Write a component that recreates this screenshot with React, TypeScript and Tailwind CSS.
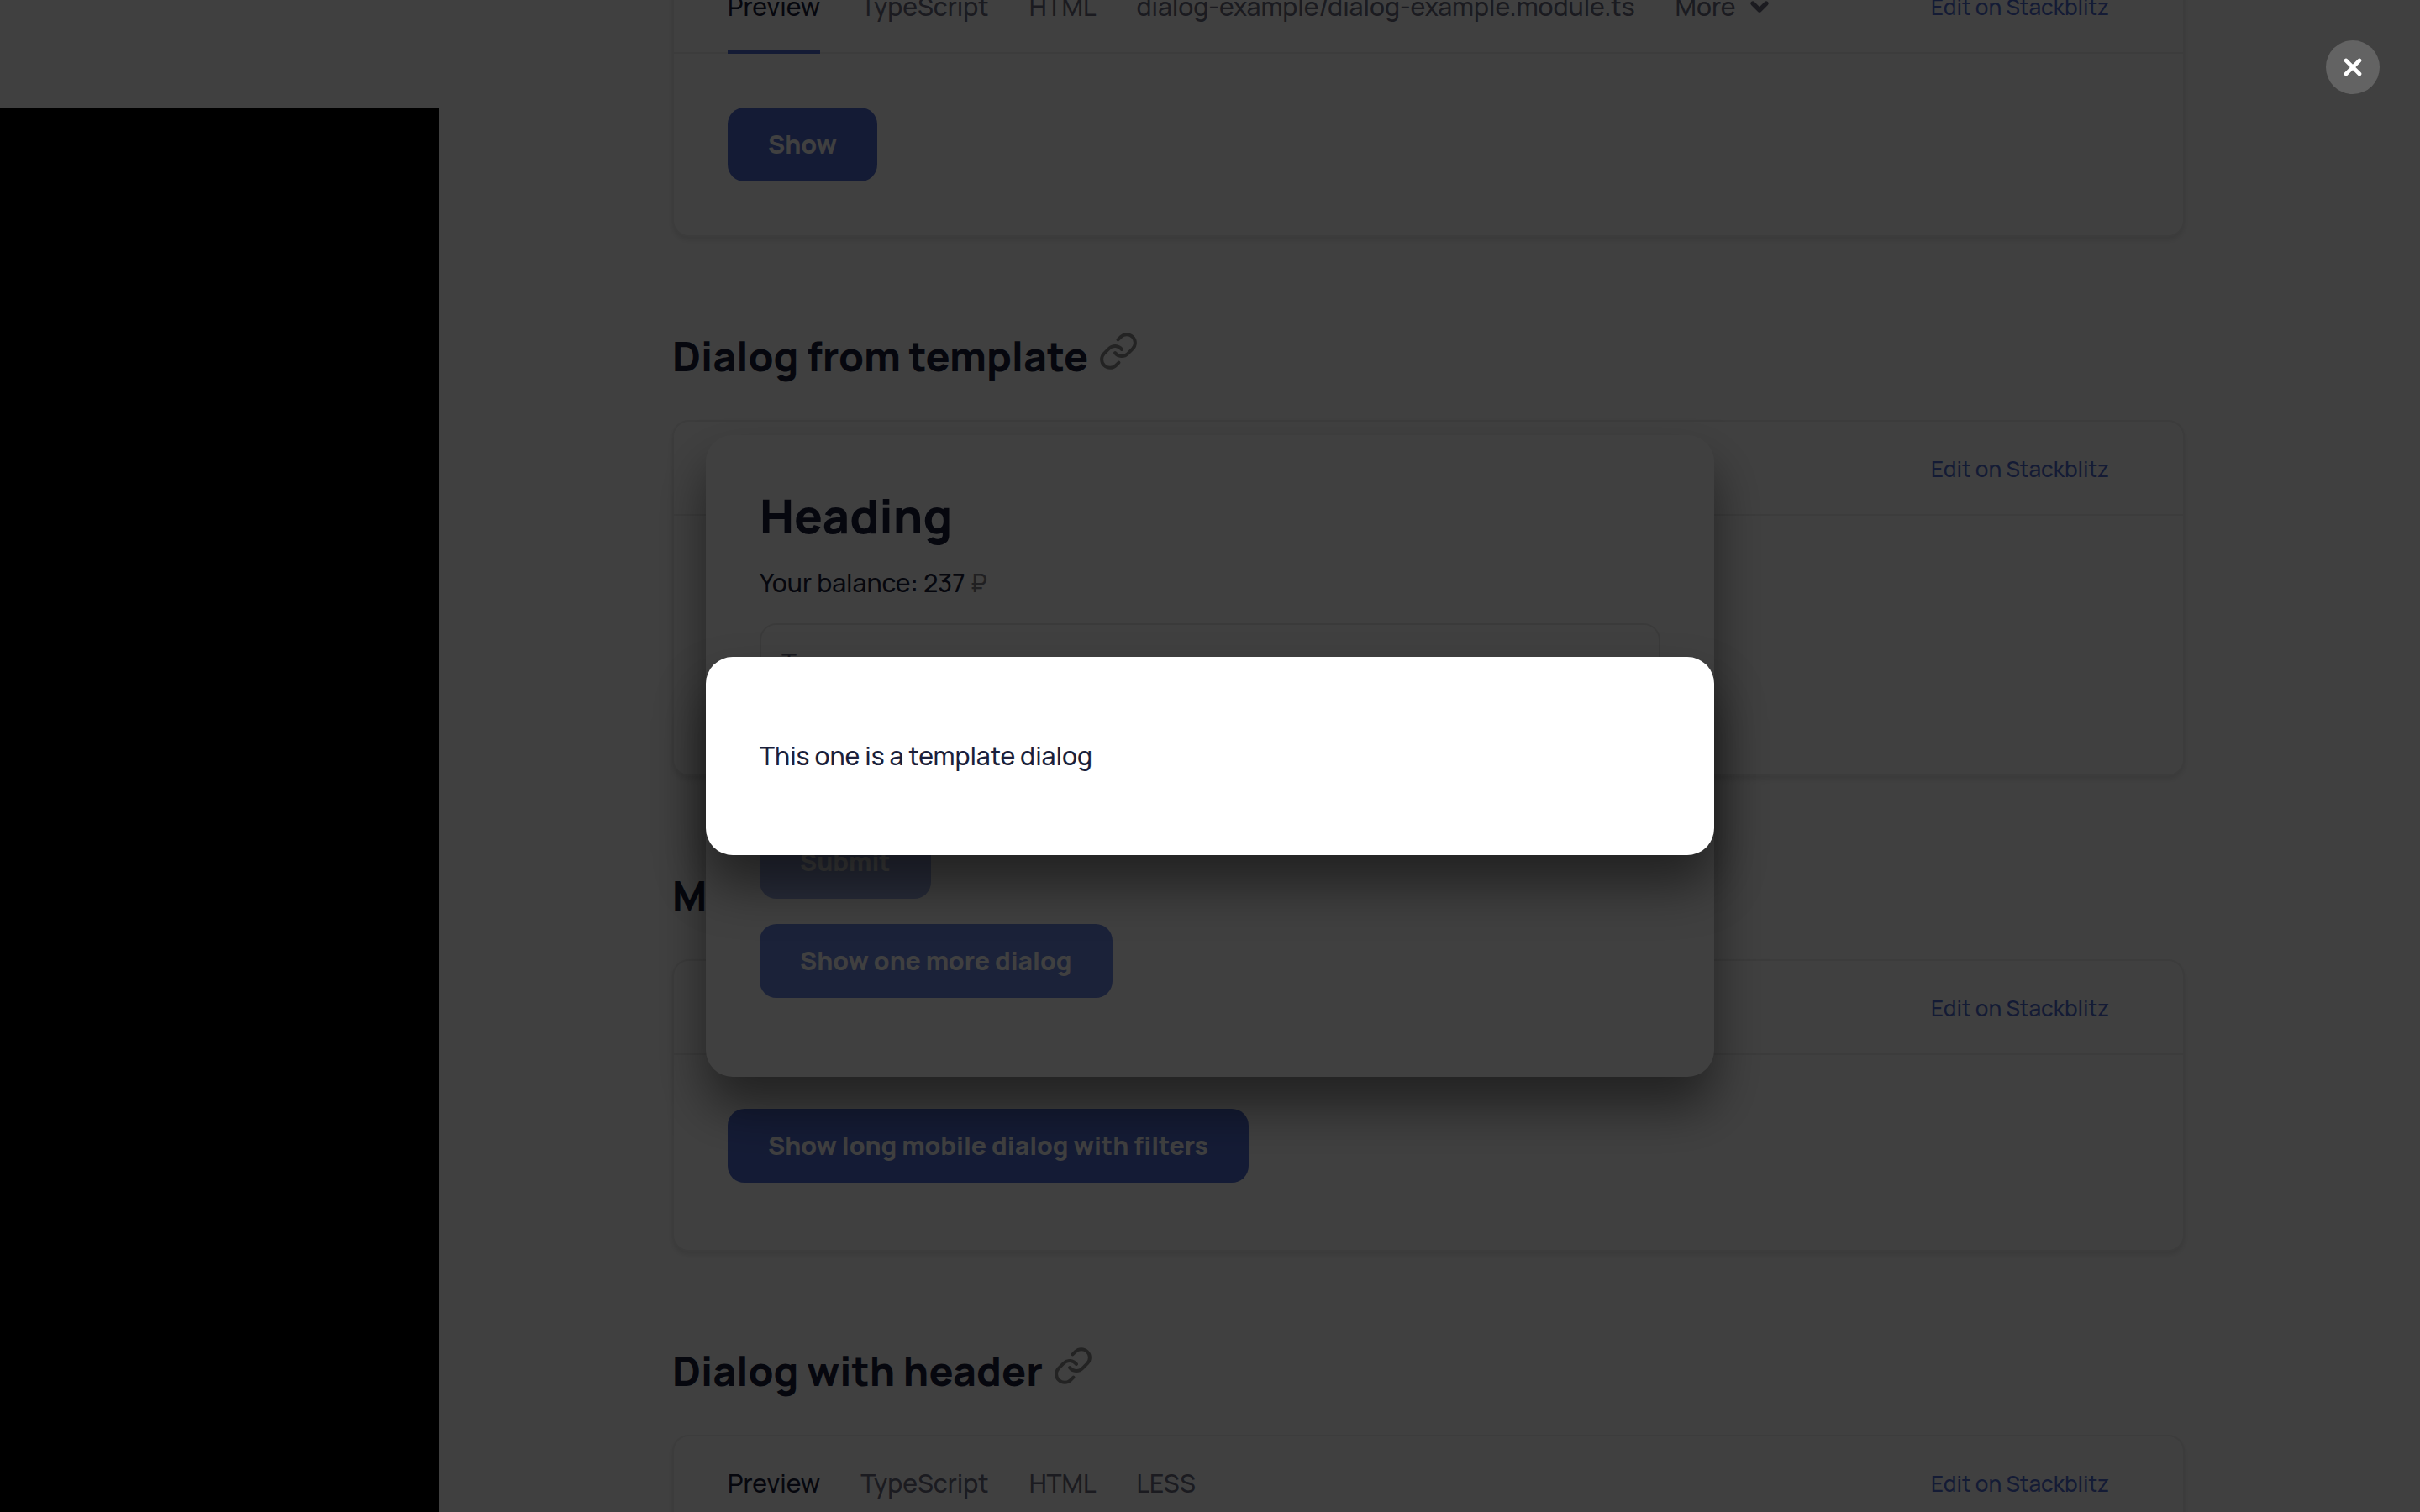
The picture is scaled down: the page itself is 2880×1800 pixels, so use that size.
import type { ReactNode } from "react";
import { ChevronDown, Link, X } from "lucide-react";

const primaryButton = "h-22 rounded-[20px] px-12 text-[30px] leading-9 font-extrabold text-white";

function Heading({ children }: { children: ReactNode }) {
  return (
    <h2 className="mt-28 mb-[46px] flex items-start gap-3 text-[48px] leading-15 font-extrabold">
      {children}
      <a href="#" aria-label="Link to this section" className="text-[#8d8d8d]">
        <Link size={48} strokeWidth={2} />
      </a>
    </h2>
  );
}

function Card({ tabs, more, children }: { tabs: string[]; more?: boolean; children?: ReactNode }) {
  return (
    <section className="rounded-[20px] border-2 border-[#ededed] bg-white shadow-[0_4px_6px_rgba(0,0,0,0.1)]">
      <header className="flex h-28 items-stretch border-b-2 border-[#ededed] pr-[88px] pl-16">
        <nav className="-mb-0.5 flex flex-1 gap-12 text-[30px] leading-9 text-[#6b6d7f]">
          {tabs.map((tab, i) => (
            <button
              key={tab}
              type="button"
              className={i === 0 ? "border-b-4 border-[#526ed3] pt-1 text-[#1b1f3b]" : ""}
            >
              {tab}
            </button>
          ))}
          {more && (
            <button type="button" className="flex items-center gap-3">
              More
              <ChevronDown size={32} strokeWidth={4} />
            </button>
          )}
        </nav>
        <a href="#" className="self-center pt-0.5 text-[26px] leading-9 text-[#526ed3]">
          Edit on Stackblitz
        </a>
      </header>
      {children}
    </section>
  );
}

export default function App() {
  return (
    <div className="relative h-screen overflow-hidden bg-white font-['Manrope','Inter',sans-serif] text-[30px] leading-12 font-medium text-[#1b1f3b]">
      <div className="flex h-full">
        <aside className="mt-32 w-[522px] shrink-0 bg-black" />
        <main className="-mt-[50px] min-w-0 flex-1 pr-[280px] pl-[278px]">
          <Card tabs={["Preview", "TypeScript", "HTML", "dialog-example/dialog-example.module.ts"]} more>
            <div className="p-16 leading-none">
              <button type="button" className={`${primaryButton} bg-[#526ed3]`}>Show</button>
            </div>
          </Card>

          <Heading>Dialog from template</Heading>
          <Card tabs={[]}>
            <div className="h-[308px]" />
          </Card>

          <Heading>Mobile dialog</Heading>
          <Card tabs={[]}>
            <div className="p-16 pb-20 leading-none">
              <button type="button" className={`${primaryButton} bg-[#526ed3]`}>
                Show long mobile dialog with filters
              </button>
            </div>
          </Card>

          <Heading>Dialog with header</Heading>
          <Card tabs={["Preview", "TypeScript", "HTML", "LESS"]}>
            <div className="h-60" />
          </Card>
        </main>
      </div>

      <div className="absolute inset-0 flex items-center justify-center">
        <div
          role="dialog"
          aria-label="Heading"
          className="flex w-[1200px] flex-col items-start rounded-[32px] bg-white px-16 pt-16 pb-[94px] shadow-[0_36px_60px_rgba(0,0,0,0.48)]"
        >
          <h2 className="text-[56px] leading-16 font-extrabold">Heading</h2>
          <p className="mt-6">
            Your balance: 237 <span className="text-[#7f8089]">₽</span>
          </p>
          <input
            type="text"
            aria-label="Type a name"
            placeholder="Type a name"
            className="mt-6 h-[92px] w-full rounded-[20px] border-2 border-[#e8e8e8] px-6 placeholder:text-[#6b6d7f]"
          />
          <button type="button" disabled className={`${primaryButton} mt-[148px] bg-[#526ed3] opacity-55`}>
            Submit
          </button>
          <button type="button" className={`${primaryButton} mt-[30px] bg-[#6c86e2]`}>
            Show one more dialog
          </button>
        </div>
      </div>

      <div className="absolute inset-0 flex items-center justify-center bg-black/75">
        <div
          role="dialog"
          aria-modal="true"
          aria-label="Template dialog"
          className="w-[1200px] rounded-[32px] bg-white px-16 py-[94px] shadow-[0_36px_60px_rgba(0,0,0,0.48)]"
        >
          <p>This one is a template dialog</p>
        </div>
        <button
          type="button"
          aria-label="Close"
          className="absolute top-12 right-12 flex size-16 items-center justify-center rounded-full bg-[#636363] text-white"
        >
          <X size={32} strokeWidth={3.5} />
        </button>
      </div>
    </div>
  );
}
